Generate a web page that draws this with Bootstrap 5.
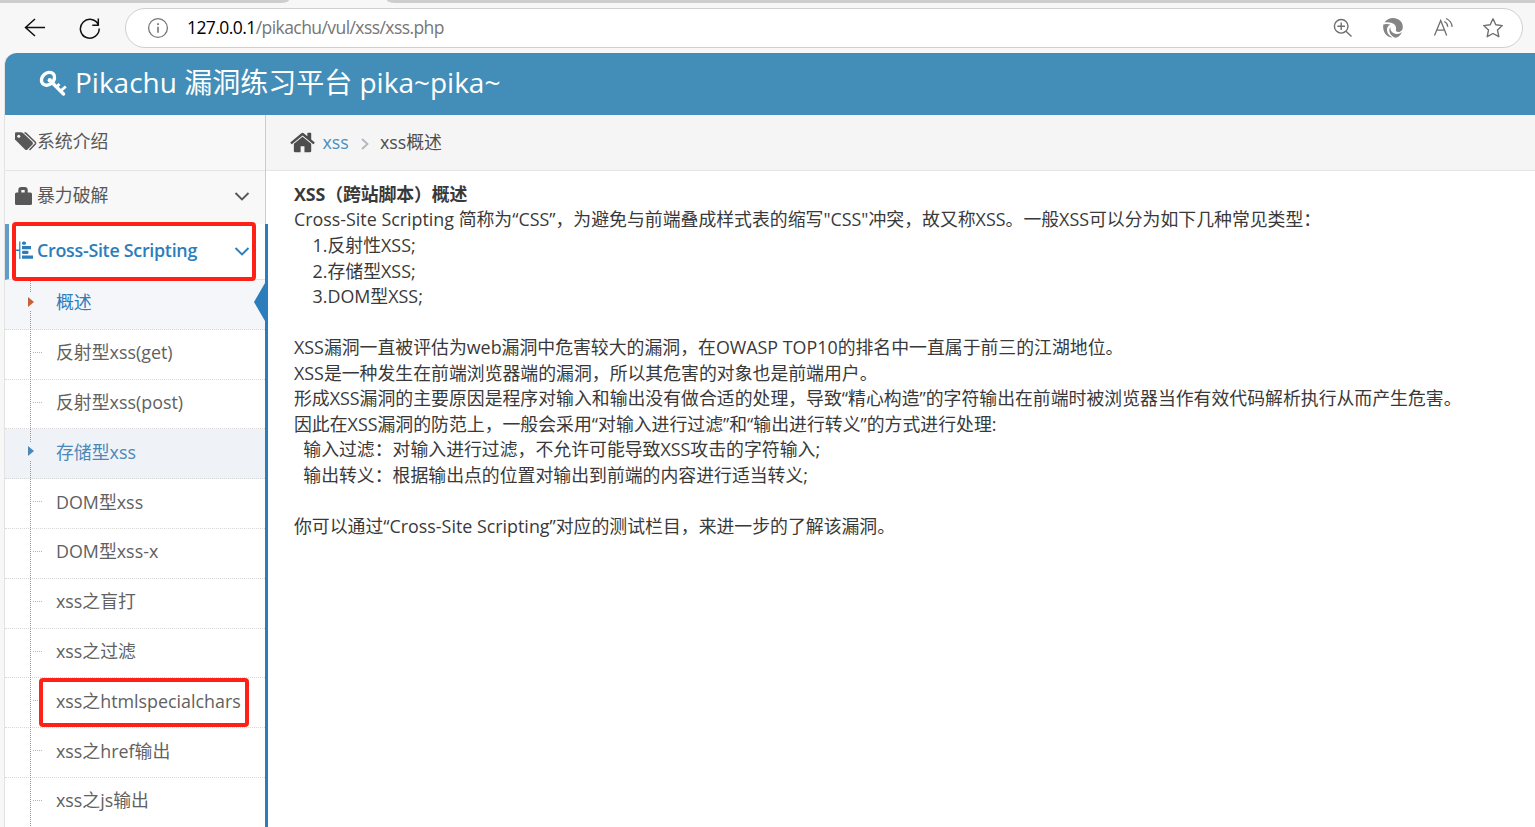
<!DOCTYPE html>
<html lang="zh-CN">
<head>
    <meta charset="UTF-8">
    <meta name="viewport" content="width=device-width, initial-scale=1.0">
    <title>Get the pikachu</title>
    <!-- Bootstrap CSS -->
    <link href="https://cdn.jsdelivr.net/npm/bootstrap@5.3.2/dist/css/bootstrap.min.css" rel="stylesheet">
    <style>
        body {
            font-family: "Open Sans", "Noto Sans CJK SC", sans-serif;
            font-size: 17.875px;
            line-height: 25.54px;
            color: #393939;
            background: #f7f7f7;
            height: 100vh;
        }
        svg { display: block; flex: none; }
        a { text-decoration: none; }

        /* browser bar */
        .tab-strip { height: 3px; }
        .tab-strip div { background: #cdcdcd; }
        .tab-left { width: 289px; border-bottom-right-radius: 8px 3px; }
        .tab-right { margin-left: 98px; border-bottom-left-radius: 8px 3px; }
        .toolbar { height: 50px; padding: 5px 12px 5px 24px; }
        .reload { margin-left: 32px; }
        .address { height: 40px; margin-left: 24px; padding: 0 18px 0 21px; border: 1px solid #d0d0d0; background: #fff; color: #767676; font-size: 17.5px; }
        .address-url { margin-left: 18px; letter-spacing: -.57px; }
        .address-url span { color: #000; }
        .address-tools { gap: 28px; }

        /* page */
        .page { margin-left: 5px; box-shadow: -1px 0 0 #e3e3e3; border-top-left-radius: 12px; }
        .top-bar { height: 62px; padding-left: 33px; background: #438eb9; border-top-left-radius: 12px; color: #fff; font-size: 28px; line-height: 58px; }
        .side { width: 261px; background: #fff; border-right: 1px solid #ccc; }
        .side-link { height: 54px; padding: 0 15px 4px 9px; background: #f8f8f8; border-bottom: 1px solid #e5e5e5; color: #585858; }
        .side-link:first-child { height: 56px; padding-bottom: 2px; }
        .side-link .side-icon { width: 23px; }
        .side-link.current { height: 56px; padding-left: 5px; padding-bottom: 1px; background: #fff; border-left: 4px solid #629cc9; color: #2b7dbc; font-weight: 600; letter-spacing: -.28px; }
        .open-group { margin-top: -1px; box-shadow: 3px 0 0 #2b7dbc; }
        .sub-list::before { content: ""; position: absolute; z-index: 1; left: 25px; top: 0; bottom: 0; border-left: 1px dotted #6fa2c4; }
        .sub-link { height: 49.8px; padding: 0 0 2.300px 51px; border-bottom: 1px dotted #d8d8d8; color: #616161; }
        .sub-link::before { content: ""; position: absolute; left: 28px; top: 22px; width: 9px; border-top: 1px dotted #9dbdd6; }
        .sub-link.marked::before { z-index: 2; left: 23px; top: 13px; width: 6px; height: 18px; border: 0; background: inherit; }
        .sub-link.marked::after { content: ""; position: absolute; z-index: 3; left: 23px; top: 17px; border: 5px solid transparent; border-left: 6px solid #4b88b7; border-right: 0; }
        .sub-link.current-sub { background: #f4f6fa; color: #2b7dbc; padding-bottom: 3px; }
        .sub-link.current-sub::after { border-left-color: #c86139; }
        .sub-link.hovered { background: #eff3f8; color: #4b88b7; }
        .pointer { right: 0; top: 3px; }

        .crumbs { height: 56px; padding-left: 24px; background: #f5f5f5; border-bottom: 1px solid #e5e5e5; color: #4d4d4d; }
        .crumbs a { margin-left: 5.5px; color: #4c8fbd; }
        .crumb-arrow { margin: 3px 10px 0 11px; }
        .article { padding: 10.95px 0 0 28px; white-space: pre; }
        .article b { letter-spacing: -.1px; }

        /* red frames round the menu entries */
        .frame { border: 4px solid #ff2016; border-radius: 4px; z-index: 5; }
        .frame-group { left: 7px; top: -2px; width: 244px; height: 59px; }
        .frame-item { left: 34px; top: 0; width: 210px; height: 49px; }
    </style>
</head>
<body class="d-flex flex-column overflow-hidden">
    <!-- Browser bar -->
    <div class="tab-strip d-flex flex-shrink-0">
        <div class="tab-left"></div>
        <div class="tab-right flex-grow-1"></div>
    </div>
    <div class="toolbar d-flex align-items-center flex-shrink-0">
        <svg width="22" height="22" viewBox="0 0 22 22" fill="none" stroke="#111" stroke-width="1.5"><path d="M21 10.500H1.500M11 2L1.500 10.500l9.500 8.500"/></svg>
        <svg class="reload" width="23" height="23" viewBox="0 0 23 23" fill="none" stroke="#111" stroke-width="1.5"><path d="M20.500 8.200A9.400 9.400 0 1 0 21.200 11.500M20.300 1.500v6.700h-6"/></svg>
        <div class="address rounded-pill d-flex align-items-center flex-grow-1">
            <svg width="22" height="22" viewBox="0 0 22 22" fill="none" stroke="#767676" stroke-width="1.300"><circle cx="11" cy="11" r="9.400"/><path d="M11 9.800v6" stroke-width="1.600"/><path d="M11 6.200v1.800" stroke-width="1.800"/></svg>
            <div class="address-url"><span>127.0.0.1</span>/pikachu/vul/xss/xss.php</div>
            <div class="address-tools d-flex ms-auto">
                <svg width="22" height="22" viewBox="0 0 22 22" fill="none" stroke="#6f6f6f" stroke-width="1.400"><circle cx="9.200" cy="9.300" r="6.800"/><path d="M9.200 5.500v7.600M5.400 9.300H13M14 14.200l5.500 5.300"/></svg>
                <svg width="22" height="22" viewBox="0 0 22 22" fill="#858585">
                    <path d="M2.500 5.500C4.500 2.500 7.500 1 11 1c5.500 0 9.700 3.600 9.800 8.500.1 3.200-1.600 5.500-4.300 5.500-1.800 0-2.900-.9-2.600-2 .9-3-1-6-4-7-2.500-.9-5.200-.9-7.400-.5z"/>
                    <path d="M1.300 7.500c2-.7 4.800-.8 7.200.3C5.900 8.500 4.600 11 5 13.800c.5 3 2.700 5.400 5.500 6.700C4.400 20.500.2 14.500 1.300 7.500z"/>
                    <path d="M8.300 10c-.2 4 2.500 6.700 6.200 6.900 2.200.1 4.300-.7 5.500-1.900-1.200 3.300-3.800 5.500-6.800 5.700C9 19.500 5.500 14 8.300 10z"/>
                </svg>
                <svg width="22" height="22" viewBox="0 0 22 22" fill="none" stroke="#6f6f6f" stroke-width="1.300"><path d="M2.500 18.500L8.700 3.500l6 15M4.800 13.200h7.800M12.300 4.500q3.200 1.500 3.400 5.200M14 1.500q5.500 2.300 6.200 8.300"/></svg>
                <svg width="22" height="22" viewBox="0 0 22 22" fill="none" stroke="#6f6f6f" stroke-width="1.400" stroke-linejoin="round"><path d="M11 1.800l2.800 6 6.500.8-4.800 4.500 1.300 6.600-5.800-3.200-5.800 3.200 1.300-6.600L1.700 8.600l6.500-.8z"/></svg>
            </div>
        </div>
    </div>

    <!-- Page -->
    <div class="page flex-grow-1 d-flex flex-column">
        <div class="top-bar d-flex">
            <svg class="me-2 mt-3" width="29" height="29" viewBox="0 0 29 29">
                <path d="M14 13.500L25.500 25" stroke="#fff" stroke-width="3.400" stroke-linecap="round"/>
                <path d="M18.500 18l3-3M22.500 22l5.300-4.500" stroke="#fff" stroke-width="2.800"/>
                <ellipse cx="10" cy="9.800" rx="7.200" ry="5.700" transform="rotate(-42 10 9.800)" fill="none" stroke="#fff" stroke-width="3.400"/>
                <circle cx="11.800" cy="11.300" r="2.200" fill="#fff"/>
            </svg>
            <span>Pikachu 漏洞练习平台 pika~pika~</span>
        </div>
        <div class="d-flex flex-grow-1">
            <!-- Sidebar -->
            <div class="side flex-shrink-0">
                <a href="#" class="side-link d-flex align-items-center">
                    <span class="side-icon"><svg width="23" height="20" viewBox="0 0 23 20"><path d="M1 1.500v6l10 10q1.300 1.100 2.500 0l5-5q1-1.200 0-2.500L9 1Q8 .3 7 .3H2Q1 .3 1 1.500z" fill="#585858"/><circle cx="4.800" cy="4.200" r="1.500" fill="#f8f8f8"/><path d="M10.500.8q1 .1 1.800.8l9 8.700q.7.800 0 1.700L15.500 18" fill="none" stroke="#585858" stroke-width="1.500"/></svg></span>
                    <span>系统介绍</span>
                </a>
                <a href="#" class="side-link d-flex align-items-center">
                    <span class="side-icon"><svg width="20" height="20" viewBox="0 0 20 20" fill="#585858"><path d="M4.300 7V4q0-3 3-3h3.400q3 0 3 3v3h-3V4H7.300V7z"/><rect x="1" y="6.500" width="17" height="12.500" rx="1.500"/></svg></span>
                    <span>暴力破解</span>
                    <svg class="ms-auto" width="16" height="12" viewBox="0 0 16 12" fill="none" stroke="#585858" stroke-width="1.900"><path d="M1.500 3L8 9.500 14.500 3"/></svg>
                </a>
                <div class="open-group position-relative">
                    <div class="side-link current d-flex align-items-center">
                        <span class="side-icon"><svg width="22" height="20" viewBox="0 0 22 20" fill="#2b7dbc"><path d="M5.200.5h1.200v17.500H5.200zM1.500 8.500h4v1.600h-4zM8 5h9v3.200H8zM8 14.500h11v3.200H8z"/><rect x="8" y=".5" width="4" height="3.300" rx="1.500"/><rect x="8" y="9.700" width="6.500" height="3.300" rx="1.300"/></svg></span>
                        <span>Cross-Site Scripting</span>
                        <svg class="ms-auto" width="16" height="12" viewBox="0 0 16 12" fill="none" stroke="#2b7dbc" stroke-width="1.900"><path d="M1.500 3L8 9.500 14.500 3"/></svg>
                    </div>
                    <div class="frame frame-group position-absolute"></div>
                    <div class="sub-list position-relative">
                        <a href="#" class="sub-link marked current-sub position-relative d-flex align-items-center">概述
                            <svg class="pointer position-absolute" width="11" height="38" viewBox="0 0 11 38"><path d="M11 0v38L0 19z" fill="#2b7dbc"/></svg>
                        </a>
                        <a href="#" class="sub-link position-relative d-flex align-items-center">反射型xss(get)</a>
                        <a href="#" class="sub-link position-relative d-flex align-items-center">反射型xss(post)</a>
                        <a href="#" class="sub-link marked hovered position-relative d-flex align-items-center">存储型xss</a>
                        <a href="#" class="sub-link position-relative d-flex align-items-center">DOM型xss</a>
                        <a href="#" class="sub-link position-relative d-flex align-items-center">DOM型xss-x</a>
                        <a href="#" class="sub-link position-relative d-flex align-items-center">xss之盲打</a>
                        <a href="#" class="sub-link position-relative d-flex align-items-center">xss之过滤</a>
                        <a href="#" class="sub-link position-relative d-flex align-items-center">xss之htmlspecialchars<span class="frame frame-item position-absolute"></span></a>
                        <a href="#" class="sub-link position-relative d-flex align-items-center">xss之href输出</a>
                        <a href="#" class="sub-link position-relative d-flex align-items-center">xss之js输出</a>
                    </div>
                </div>
            </div>

            <!-- Content -->
            <div class="flex-grow-1 bg-white">
                <div class="crumbs d-flex align-items-center">
                    <svg width="27" height="27" viewBox="0 0 1792 1792" fill="#4d4d4d"><path d="M1408 992v480q0 26-19 45t-45 19h-384v-384h-256v384h-384q-26 0-45-19t-19-45v-480q0-1 .5-3t.5-3l575-474 575 474q1 2 1 6zm223-69l-62 74q-8 9-21 11h-3q-13 0-21-7l-692-577-692 577q-12 8-24 7-13-2-21-11l-62-74q-8-10-7-23.500t11-21.500l719-599q32-26 76-26t76 26l244 204v-195q0-14 9-23t23-9h192q14 0 23 9t9 23v408l219 182q10 8 11 21.500t-7 23.500z"/></svg>
                    <a href="#">xss</a>
                    <svg class="crumb-arrow" width="10" height="14" viewBox="0 0 10 14" fill="none" stroke="#b2b6bf" stroke-width="1.800"><path d="M2 2l5.500 5L2 12"/></svg>
                    <span>xss概述</span>
                </div>
                <div class="article"><b>XSS（跨站脚本）概述</b>
Cross-Site Scripting 简称为“CSS”，为避免与前端叠成样式表的缩写"CSS"冲突，故又称XSS。一般XSS可以分为如下几种常见类型：
    1.反射性XSS;
    2.存储型XSS;
    3.DOM型XSS;

XSS漏洞一直被评估为web漏洞中危害较大的漏洞，在OWASP TOP10的排名中一直属于前三的江湖地位。
XSS是一种发生在前端浏览器端的漏洞，所以其危害的对象也是前端用户。
形成XSS漏洞的主要原因是程序对输入和输出没有做合适的处理，导致“精心构造”的字符输出在前端时被浏览器当作有效代码解析执行从而产生危害。
因此在XSS漏洞的防范上，一般会采用“对输入进行过滤”和“输出进行转义”的方式进行处理:
  输入过滤：对输入进行过滤，不允许可能导致XSS攻击的字符输入;
  输出转义：根据输出点的位置对输出到前端的内容进行适当转义;

你可以通过“Cross-Site Scripting”对应的测试栏目，来进一步的了解该漏洞。</div>
            </div>
        </div>
    </div>

    <!-- Bootstrap Bundle with Popper -->
    <script src="https://cdn.jsdelivr.net/npm/bootstrap@5.3.2/dist/js/bootstrap.bundle.min.js"></script>
</body>
</html>
